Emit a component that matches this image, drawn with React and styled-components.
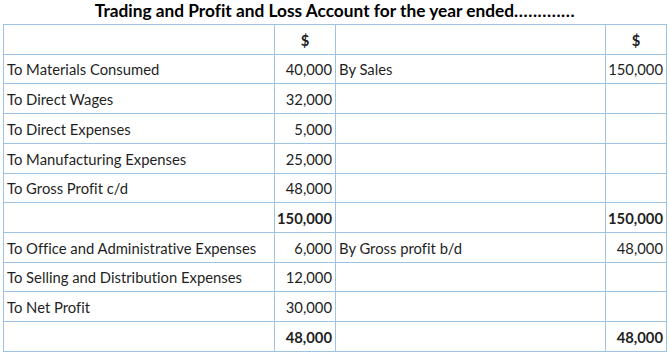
import React from "react";
import styled, { createGlobalStyle } from "styled-components";

const Global = createGlobalStyle`
  html, body { margin: 0; padding: 0; background: #fff; }
  body {
    font-family: Lato, "Open Sans", sans-serif;
    color: #1f1f1f;
    font-variant-ligatures: none;
  }
`;

const Page = styled.div`
  padding-left: 3px;
  width: 664px;
`;

const Title = styled.div`
  height: 24px;
  display: flex;
  align-items: flex-end;
  justify-content: center;
  font-weight: 700;
  font-size: 17.3px;
  line-height: 20px;
  color: #000;
  padding-bottom: 3px;
  box-sizing: border-box;
`;

const Dots = styled.span`
  letter-spacing: 0.6px;
`;

const Sheet = styled.div`
  display: grid;
  grid-template-columns: 270px 60px 269px 60px;
  grid-auto-rows: 28.73px;
  gap: 1px;
  padding: 1px;
  background: #9dc3e6;
  width: max-content;
`;

const Cell = styled.div`
  background: #fff;
  display: flex;
  align-items: flex-end;
  justify-content: ${(p) =>
    p.$align === "center" ? "center" : p.$align === "right" ? "flex-end" : "flex-start"};
  padding: 0 3px 5px 3px;
  font-size: 14.8px;
  line-height: 17px;
  font-weight: ${(p) => (p.$bold ? 700 : 400)};
  white-space: nowrap;
  overflow: hidden;
  box-sizing: border-box;
`;

const rows = [
  { head: true, a: "", b: "$", c: "", d: "$" },
  { a: "To Materials Consumed", b: "40,000", c: "By Sales", d: "150,000" },
  { a: "To Direct Wages", b: "32,000", c: "", d: "" },
  { a: "To Direct Expenses", b: "5,000", c: "", d: "" },
  { a: "To Manufacturing Expenses", b: "25,000", c: "", d: "" },
  { a: "To Gross Profit c/d", b: "48,000", c: "", d: "" },
  { total: true, a: "", b: "150,000", c: "", d: "150,000" },
  { a: "To Office and Administrative Expenses", b: "6,000", c: "By Gross profit b/d", d: "48,000" },
  { a: "To Selling and Distribution Expenses", b: "12,000", c: "", d: "" },
  { a: "To Net Profit", b: "30,000", c: "", d: "" },
  { total: true, a: "", b: "48,000", c: "", d: "48,000" },
];

export default function App() {
  return (
    <>
      <Global />
      <Page>
        <Title>
          Trading and Profit and Loss Account for the year ended<Dots>.............</Dots>
        </Title>
        <Sheet>
          {rows.map((r, i) => {
            const numAlign = r.head ? "center" : "right";
            const bold = r.head || r.total;
            return (
              <React.Fragment key={i}>
                <Cell>{r.a}</Cell>
                <Cell $align={numAlign} $bold={bold}>{r.b}</Cell>
                <Cell>{r.c}</Cell>
                <Cell $align={numAlign} $bold={bold}>{r.d}</Cell>
              </React.Fragment>
            );
          })}
        </Sheet>
      </Page>
    </>
  );
}
